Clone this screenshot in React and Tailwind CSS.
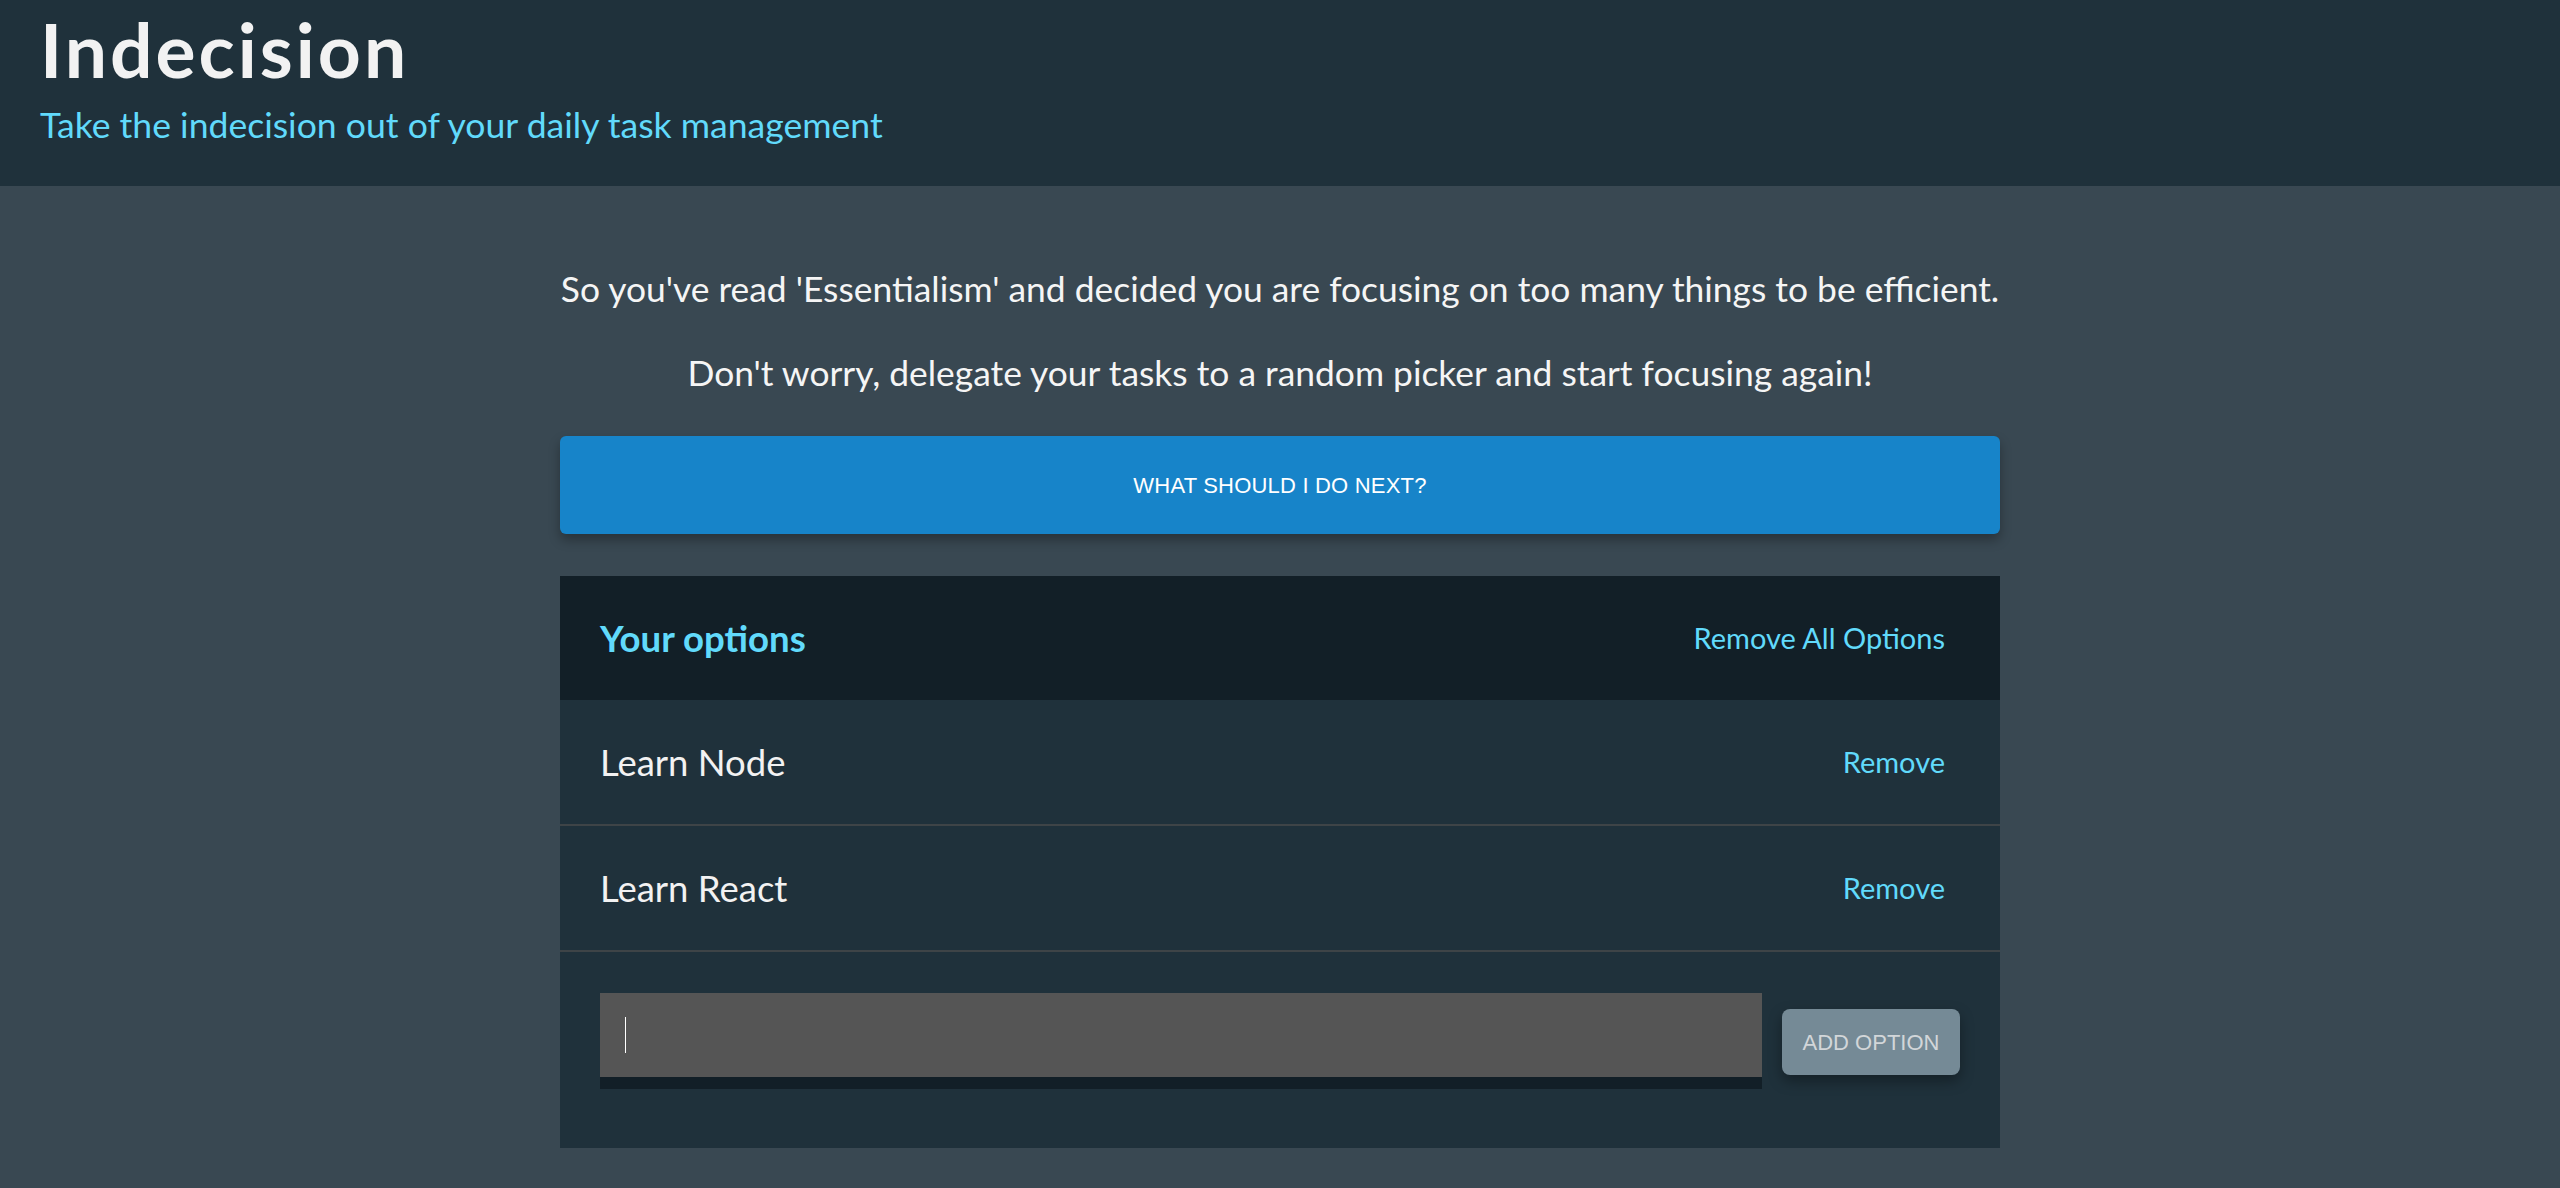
const options = ["Learn Node", "Learn React"];

function Header() {
  return (
    <header className="bg-[#1f313b] h-[186px] pl-[40px] pt-[4px]">
      <h1 className="text-[75px] leading-[90px] font-bold tracking-[3px] text-[#f2f2f2]">Indecision</h1>
      <h2 className="mt-[10px] text-[35.6px] leading-[42px] text-[#61dafb]">
        Take the indecision out of your daily task management
      </h2>
    </header>
  );
}

function Option({ text }) {
  return (
    <div className="flex items-center justify-between h-[126px] border-b-2 border-[#3e4447] pl-[40px] pr-[55px]">
      <p className="text-[36.5px] text-[#f2f2f2]">{text}</p>
      <button className="text-[29px] text-[#61dafb]">Remove</button>
    </div>
  );
}

function Widget() {
  return (
    <div className="mt-[42px] bg-[#1f313b]">
      <div className="flex items-center justify-between h-[124px] bg-[#121f27] pl-[40px] pr-[55px]">
        <h3 className="text-[36.6px] font-bold text-[#61dafb]">Your options</h3>
        <button className="text-[29px] text-[#61dafb]">Remove All Options</button>
      </div>
      {options.map((o) => (
        <Option key={o} text={o} />
      ))}
      <form className="flex items-center pl-[40px] pr-[40px] pt-[41px] pb-[59px]">
        <div className="relative flex-1">
          <input
            type="text"
            className="w-full h-[96px] bg-[#555555] border-b-[12px] border-[#121f27] px-[24px] text-[30px] text-white outline-none"
          />
          <span className="absolute left-[25px] top-[24px] w-px h-[36px] bg-white" />
        </div>
        <button
          type="button"
          className="ml-[20px] mt-[2px] w-[178px] h-[66px] rounded-[8px] bg-[#758a96] text-[22px] text-[#d2d6d9] shadow-[0_6px_14px_rgba(0,0,0,0.35)] font-['Liberation_Sans',Arial,sans-serif]"
        >
          ADD OPTION
        </button>
      </form>
    </div>
  );
}

export default function App() {
  return (
    <div className="min-h-screen bg-[#394852] font-['Lato',sans-serif]">
      <Header />
      <main className="w-[1440px] mx-auto pt-[75px] pb-[40px]">
        <p className="text-center whitespace-nowrap text-[35.4px] leading-[56px] text-[#f5f5f5]">
          So you've read 'Essentialism' and decided you are focusing on too many things to be efficient.
        </p>
        <p className="mt-[28px] text-center whitespace-nowrap text-[35.4px] leading-[56px] text-[#f5f5f5]">
          Don't worry, delegate your tasks to a random picker and start focusing again!
        </p>
        <button className="mt-[35px] w-full h-[98px] rounded-[6px] bg-[#1784c9] text-white text-[22px] tracking-[0.2px] font-medium font-['Liberation_Sans',Arial,sans-serif] shadow-[0_6px_12px_rgba(0,0,0,0.3)]">
          WHAT SHOULD I DO NEXT?
        </button>
        <Widget />
      </main>
    </div>
  );
}
